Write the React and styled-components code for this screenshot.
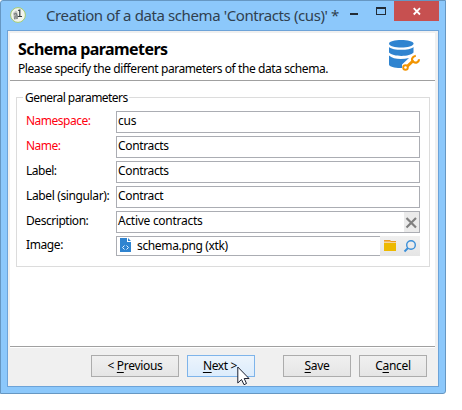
import React from "react";
import styled, { createGlobalStyle } from "styled-components";

const Global = createGlobalStyle`
  * { box-sizing: border-box; }
  body { margin: 0; background: #fff; overflow: hidden; }
  svg { display: block; flex: none; }
`;

const Text = styled.span`
  display: inline-block;
  white-space: nowrap;
  letter-spacing: ${(p) => p.$ls || 0}px;
`;

const Window = styled.div`
  position: relative;
  width: 446px;
  height: 394px;
  padding: 0 6px 6px;
  background: #8cc8fb;
  border: 1px solid #6697c2;
  border-radius: 3px 0 3px 0;
  font: 12px/16px "Noto Sans", "Open Sans", sans-serif;
  color: #000;
`;

const TitleBar = styled.div`
  display: flex;
  height: 29px;
  padding-left: 3px;
`;

const AppIcon = styled.svg`
  margin-top: 5px;
`;

const Title = styled.div`
  flex: 1;
  margin-left: 19px;
  padding-top: 4px;
  font-size: 15px;
  line-height: 21px;
  color: #30404f;
`;

const Panel = styled.div`
  display: flex;
  flex-direction: column;
  width: 432px;
  height: 357px;
  padding: 2px 2px 0;
  background: #f0f0f0;
  border: 1px solid #6da3d8;
`;

const Header = styled.header`
  display: flex;
  justify-content: space-between;
  width: 425px;
  height: 48px;
  padding: 5px 15px 0 8px;
  background: #fff;
  border-bottom: 1px solid #a0a0a0;
`;

const Heading = styled.h1`
  margin: 0;
  font-size: 16px;
  line-height: 22px;
  font-weight: 700;
`;

const Intro = styled.p`
  margin: 1px 0 0;
`;

const Content = styled.main`
  width: 425px;
  height: 266px;
  padding: 16px 5px 0 6px;
  background: #fff;
  border-bottom: 1px solid #a0a0a0;
`;

const Group = styled.section`
  height: 170px;
  padding: 0 9px;
  border: 1px solid #dcdcdc;
`;

const Legend = styled.div`
  width: max-content;
  height: 13px;
  margin: -8px 0 8px -3px;
  padding: 0 1px 0 2px;
  background: #fff;
`;

const Row = styled.div`
  display: grid;
  grid-template-columns: 90px 304px;
  margin-bottom: 3px;
`;

const Label = styled.label`
  padding-top: ${(p) => (p.$compact ? 1 : 2)}px;
  color: ${(p) => (p.$required ? "#ff0010" : "#000")};
`;

const Field = styled.div`
  display: flex;
  justify-content: space-between;
  height: 22px;
  padding-left: 1px;
  line-height: 18px;
  background: #fff;
  border: 1px solid #abadb3;
`;

const ImageField = styled.div`
  display: grid;
  grid-template-columns: 264px 40px;
  height: 20px;
`;

const ImageValue = styled.div`
  display: flex;
  padding: 1px 0 0 3px;
  gap: 6px;
  line-height: 15px;
  border: 1px solid #abadb3;
  border-right: 0;
`;

const Tools = styled.div`
  display: flex;
  background: linear-gradient(#f0f0f0, #e5e5e5);
`;

const Footer = styled.footer`
  display: flex;
  height: 38px;
  width: 425px;
  padding: 7px 8px 0 81px;
  gap: 8px;
  border-top: 1px solid #fff;
`;

const Button = styled.button`
  width: ${(p) => p.$w || 68}px;
  height: 22px;
  margin: 0;
  margin-left: ${(p) => p.$gap || 0}px;
  padding: 0 ${(p) => (p.$active ? 2 : 0)}px 1px 0;
  flex: none;
  font: inherit;
  line-height: 18px;
  color: #000;
  border: 1px solid ${(p) => (p.$active ? "#7eb4ea" : "#acacac")};
  background: ${(p) => (p.$active ? "linear-gradient(#ecf4fc, #dcecfc)" : "linear-gradient(#f0f0f0, #e5e5e5)")};
  u { text-underline-offset: 2px; text-decoration-thickness: 1px; text-decoration-skip-ink: none; }
`;

const Cursor = styled.svg`
  position: absolute;
  left: 236px;
  top: 365px;
`;

const fields = [
  { label: "Namespace:", value: "cus", required: true, labelSpacing: -0.5, spacing: -0.2 },
  { label: "Name:", value: "Contracts", required: true, labelSpacing: -0.5, spacing: -0.35 },
  { label: "Label:", value: "Contracts", labelSpacing: -0.5, spacing: -0.35 },
  { label: "Label (singular):", value: "Contract", labelSpacing: -0.37, spacing: -0.35 },
  { label: "Description:", value: "Active contracts", labelSpacing: -0.45, spacing: -0.28, clearable: true },
];

function DatabaseIcon() {
  return (
    <svg width="32" height="34" viewBox="0 0 32 34">
      <g fill="#2f84d0">
        <path d="M1 5.5C1 .8 25.5 .8 25.5 5.5C25.5 10.8 1 10.8 1 5.5Z" />
        <path d="M1 9C5 12.8 21.5 12.8 25.5 9V14.5C22 19 5 19 1 14.5Z" />
        <path d="M1 17.5C5 21.5 14 21.8 21 20L14 26.5V30C8 30.3 1 29 1 26.5Z" />
      </g>
      <path d="M18 29.5L27 21" stroke="#fff" strokeWidth="5.5" />
      <path d="M18.5 29L25.5 22.5" stroke="#f29400" strokeWidth="3" />
      <circle cx="17.5" cy="29.5" r="2.3" fill="#fff" stroke="#f29400" strokeWidth="1.9" />
      <path d="M27.8 17.8C23.8 18.5 23 22 25.4 23.8C28 25.8 31 24 31 21.2" fill="none" stroke="#f29400" strokeWidth="2.1" />
    </svg>
  );
}

export default function App() {
  return (
    <>
      <Global />
      <Window>
        <TitleBar>
          <AppIcon width="17" height="17" viewBox="0 0 17 17">
            <circle cx="8" cy="9" r="7.4" fill="#f2f4ed" stroke="#a4cc70" />
            <path d="M3 7L6 4.5L7.5 6V13L4 14Z" fill="#c4c7c2" />
            <path d="M4 8.5Q7.5 5 7 13M5.3 9.5L4.7 13" stroke="#7c8082" fill="none" strokeWidth="1.4" />
            <path d="M8 4.5L9.8 4V11M7.8 10.5H12" fill="none" stroke="#343c3d" strokeWidth="1.2" />
          </AppIcon>
          <Title><Text $ls={-0.4}>Creation of a data schema 'Contracts (cus)' *</Text></Title>
          <svg width="90" height="21" viewBox="349 1 90 21">
            <path d="M350 13H358V15H350Z" fill="#222c36" />
            <path d="M376 7H386V15H376ZM377 9V14H385V9Z" fill="#222c36" fillRule="evenodd" />
            <path d="M394 1H439V21H394Z" fill="#c75050" />
            <path d="M413.7 8.2L420 14.5M420 8.2L413.7 14.5" stroke="#fff" strokeWidth="1.8" />
          </svg>
        </TitleBar>
        <Panel>
          <Header>
            <div>
              <Heading><Text $ls={-0.58}>Schema parameters</Text></Heading>
              <Intro><Text $ls={-0.42}>Please specify the different parameters of the data schema.</Text></Intro>
            </div>
            <DatabaseIcon />
          </Header>
          <Content>
            <Group>
              <Legend><Text $ls={-0.56}>General parameters</Text></Legend>
              {fields.map((f) => (
                <Row key={f.label}>
                  <Label $required={f.required}><Text $ls={f.labelSpacing}>{f.label}</Text></Label>
                  <Field>
                    <Text $ls={f.spacing}>{f.value}</Text>
                    {f.clearable && (
                      <svg width="15" height="20" viewBox="0 0 15 20">
                        <path d="M0 0H15V20H0Z" fill="#ebebeb" />
                        <path d="M2.5 6L12 15.5M12 6L2.5 15.5" stroke="#808080" strokeWidth="2.2" />
                      </svg>
                    )}
                  </Field>
                </Row>
              ))}
              <Row>
                <Label $compact><Text $ls={-0.4}>Image:</Text></Label>
                <ImageField>
                  <ImageValue>
                    <svg width="11" height="14" viewBox="0 0 11 14">
                      <path d="M0 0H7V4H11V14H0ZM8 0L11 3H8Z" fill="#2f84d0" />
                      <path d="M4.5 7.5L2.5 9.5L4.5 11.5M6.5 7.5L8.5 9.5L6.5 11.5" fill="none" stroke="#e5f2ff" strokeWidth="1" />
                    </svg>
                    <Text $ls={-0.35}>schema.png (xtk)</Text>
                  </ImageValue>
                  <Tools>
                    <svg width="40" height="20" viewBox="0 0 40 20">
                      <path d="M4 4H10L11 5H16V7H4Z" fill="#ed9b20" />
                      <path d="M4 5.5H10L11 6H16V7H4Z" fill="#f6d49c" />
                      <path d="M4 7H16V15H4Z" fill="#edb900" />
                      <circle cx="31" cy="9" r="4.3" fill="none" stroke="#3b8fd8" strokeWidth="1.4" />
                      <path d="M28 12L24.5 15.5" stroke="#3b8fd8" strokeWidth="2" />
                    </svg>
                  </Tools>
                </ImageField>
              </Row>
            </Group>
          </Content>
          <Footer>
            <Button $w={88}><Text $ls={-0.3}>&lt; <u>P</u>revious</Text></Button>
            <Button $active><Text $ls={-0.35}><u>N</u>ext &gt;</Text></Button>
            <Button $gap={20}><Text $ls={-0.35}><u>S</u>ave</Text></Button>
            <Button><Text $ls={-0.3}>C<u>a</u>ncel</Text></Button>
          </Footer>
        </Panel>
        <Cursor width="13" height="20" viewBox="0 0 13 20">
          <path d="M.8 1V17L4.5 13.5L7 18.7L9.5 17.5L7.2 12.5H12Z" fill="#fff" stroke="#1c2030" />
        </Cursor>
      </Window>
    </>
  );
}
